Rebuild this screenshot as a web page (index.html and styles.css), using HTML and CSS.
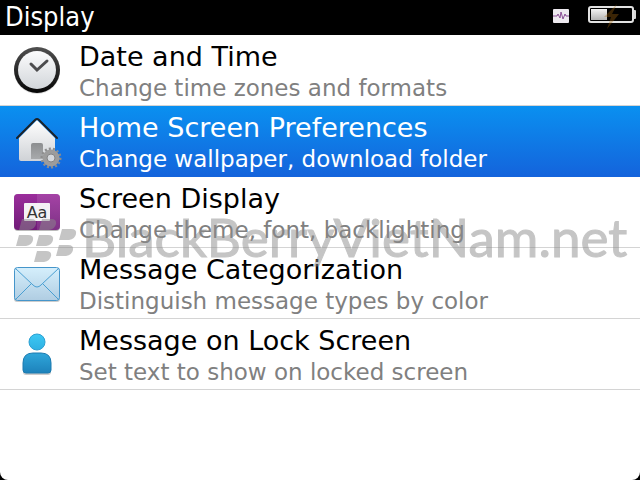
FILE: index.html
```
<!DOCTYPE html>
<html lang="en">
<head>
    <meta charset="UTF-8">
    <meta name="viewport" content="width=device-width, initial-scale=1.0">
    <title>Display</title>
    <link rel="stylesheet" href="styles.css">
</head>
<body>
    <div class="screen">
        <header class="topbar">
            <h1>Display</h1>
            <div class="status">
                <svg class="activity" viewBox="0 0 16 16" aria-hidden="true">
                    <rect y="0" width="16" height="14" rx="1" fill="#eeeaf0"/>
                    <path d="M0 7h4l1-2 2 4 1-6 2 7 2-5 1 2h3" fill="none" stroke="#8a4e96" stroke-width="1"/>
                </svg>
                <svg class="battery" viewBox="0 0 48 28" aria-hidden="true">
                    <defs>
                        <linearGradient id="charge" x1="0" y1="0" x2="0" y2="1">
                            <stop offset="0" stop-color="#f4f4f4"/>
                            <stop offset="1" stop-color="#b4b4b4"/>
                        </linearGradient>
                    </defs>
                    <rect x="1" y="4" width="44" height="15" rx="2" fill="#000" stroke="#e2e2e2" stroke-width="2"/>
                    <path d="M46 7h1q1 0 1 1v7q0 1-1 1h-1z" fill="#d8d8d8"/>
                    <rect x="3" y="6" width="16" height="11" fill="url(#charge)"/>
                    <path d="M29 1L16 14h7l-4 12 12-15h-7z" fill="#a86a10" opacity=".35"/>
                </svg>
            </div>
        </header>

        <nav class="menu">
            <a class="item" href="#">
                <svg class="icon" viewBox="0 0 50 50" aria-hidden="true">
                    <defs>
                        <linearGradient id="rim" x1="0" y1="0" x2="0" y2="1">
                            <stop offset="0" stop-color="#505050"/>
                            <stop offset="1" stop-color="#050505"/>
                        </linearGradient>
                        <linearGradient id="face" x1="0" y1="0" x2="0" y2="1">
                            <stop offset="0" stop-color="#fcfcfd"/>
                            <stop offset="1" stop-color="#d2d6da"/>
                        </linearGradient>
                    </defs>
                    <circle cx="25" cy="26" r="23" fill="#ddd"/>
                    <circle cx="25" cy="25" r="23" fill="url(#rim)"/>
                    <circle cx="25" cy="25" r="19" fill="url(#face)"/>
                    <path d="M19 19l6 6 10-9" fill="none" stroke="#4c4c4e" stroke-width="3" stroke-linecap="round"/>
                </svg>
                <div class="text">
                    <span class="title">Date and Time</span>
                    <span class="desc">Change time zones and formats</span>
                </div>
            </a>

            <a class="item selected" href="#" aria-current="true">
                <svg class="icon" viewBox="0 0 50 50" aria-hidden="true">
                    <defs>
                        <linearGradient id="wall" x1="0" y1="0" x2="0" y2="1">
                            <stop offset="0" stop-color="#ffffff"/>
                            <stop offset="1" stop-color="#cfd2d6"/>
                        </linearGradient>
                        <linearGradient id="door" x1="0" y1="0" x2="0" y2="1">
                            <stop offset="0" stop-color="#8c8e90"/>
                            <stop offset="1" stop-color="#a8aaac"/>
                        </linearGradient>
                    </defs>
                    <path d="M25 4L43 22v21q0 2-2 2H9q-2 0-2-2V22z" fill="url(#wall)"/>
                    <path d="M5 22L23 4q2-2 4 0l18 18" fill="none" stroke="#1c2228" stroke-width="2" stroke-linecap="round"/>
                    <path d="M19 43V29q0-2 2-2h8q2 0 2 2v14z" fill="url(#door)"/>
                    <circle cx="39" cy="42" r="9" fill="none" stroke="#8d8d8d" stroke-width="3" stroke-dasharray="2 2"/>
                    <circle cx="39" cy="42" r="6" fill="none" stroke="#9c9c9c" stroke-width="5"/>
                    <circle cx="39" cy="42" r="4" fill="#d5d8dc" stroke="#858585"/>
                </svg>
                <div class="text">
                    <span class="title">Home Screen Preferences</span>
                    <span class="desc">Change wallpaper, download folder</span>
                </div>
            </a>

            <a class="item" href="#">
                <svg class="icon" viewBox="0 0 50 50" aria-hidden="true">
                    <defs>
                        <linearGradient id="panel" x1="0" y1="0" x2="0" y2="1">
                            <stop offset="0" stop-color="#9b2e9c"/>
                            <stop offset="1" stop-color="#701b78"/>
                        </linearGradient>
                    </defs>
                    <rect x="2" y="7" width="46" height="37" rx="4" fill="#bbb"/>
                    <rect x="2" y="7" width="46" height="36" rx="4" fill="url(#panel)"/>
                    <path d="M25 7h19q4 0 4 4v28q0 4-4 4H25z" fill="#fff" opacity=".1"/>
                    <rect x="12" y="16" width="26" height="18" rx="1" fill="#f4f2f5"/>
                    <text class="glyph" x="25" y="31" text-anchor="middle">Aa</text>
                </svg>
                <div class="text">
                    <span class="title">Screen Display</span>
                    <span class="desc">Change theme, font, backlighting</span>
                </div>
            </a>

            <a class="item" href="#">
                <svg class="icon" viewBox="0 0 50 50" aria-hidden="true">
                    <defs>
                        <linearGradient id="paper" x1="0" y1="0" x2="0" y2="1">
                            <stop offset="0" stop-color="#d5effc"/>
                            <stop offset="1" stop-color="#b0cde2"/>
                        </linearGradient>
                    </defs>
                    <rect x="2" y="10" width="46" height="34" rx="3" fill="#ccc"/>
                    <rect x="2.500" y="9.500" width="45" height="33" rx="3" fill="url(#paper)" stroke="#4595ca"/>
                    <path d="M3 10l18 17q4 4 8 0L47 10M3 42l16-16M47 42L31 26" fill="none" stroke="#4a9fd2"/>
                </svg>
                <div class="text">
                    <span class="title">Message Categorization</span>
                    <span class="desc">Distinguish message types by color</span>
                </div>
            </a>

            <a class="item" href="#">
                <svg class="icon" viewBox="0 0 50 50" aria-hidden="true">
                    <defs>
                        <linearGradient id="head" x1="0" y1="0" x2="0" y2="1">
                            <stop offset="0" stop-color="#3cc8f4"/>
                            <stop offset="1" stop-color="#2fb0e2"/>
                        </linearGradient>
                        <linearGradient id="torso" x1="0" y1="0" x2="0" y2="1">
                            <stop offset="0" stop-color="#2fa6da"/>
                            <stop offset="1" stop-color="#1d82bb"/>
                        </linearGradient>
                    </defs>
                    <circle cx="25" cy="13" r="8" fill="url(#head)" stroke="#2ba0d2"/>
                    <path d="M11 35q0-10 10-10h8q10 0 10 10v8q0 3-3 3H14q-3 0-3-3z" fill="#ccc"/>
                    <path d="M11 34q0-10 10-10h8q10 0 10 10v7q0 3-3 3H14q-3 0-3-3z" fill="url(#torso)" stroke="#1c7bb0"/>
                </svg>
                <div class="text">
                    <span class="title">Message on Lock Screen</span>
                    <span class="desc">Set text to show on locked screen</span>
                </div>
            </a>
        </nav>

        <div class="watermark">
            <svg class="berry" viewBox="0 0 62 46" aria-hidden="true">
                <defs>
                    <path id="seed" d="M3 0h9q6 0 5 5t-7 6H0z"/>
                </defs>
                <use href="#seed" x="3" y="1"/>
                <use href="#seed" x="23" y="1"/>
                <use href="#seed" x="0" y="17"/>
                <use href="#seed" x="20" y="17"/>
                <use href="#seed" x="43" y="11"/>
                <use href="#seed" x="40" y="27"/>
                <use href="#seed" x="18" y="33"/>
            </svg>
            <span>BlackBerryVietNam.net</span>
        </div>
    </div>
</body>
</html>
```

FILE: styles.css
```
* {
    margin: 0;
    padding: 0;
    box-sizing: border-box;
}
body {
    background: #000;
    font-family: "DejaVu Sans", sans-serif;
}
.screen {
    position: relative;
    display: flex;
    flex-direction: column;
    min-height: 100vh;
}
.topbar {
    display: flex;
    justify-content: space-between;
    align-items: center;
    height: 35px;
    padding: 0 4px 2px 5px;
    color: #fff;
}
.topbar h1 {
    font-family: "DejaVu Sans Condensed", "DejaVu Sans", sans-serif;
    font-stretch: condensed;
    font-size: 27px;
    font-weight: normal;
    line-height: 32px;
}
.status {
    display: flex;
    align-items: center;
    gap: 19px;
}
.activity {
    width: 16px;
    height: 16px;
}
.battery {
    width: 48px;
    height: 28px;
}
.menu {
    flex: 1;
    background: #fff;
    border-radius: 0 0 8px 8px;
}
.item {
    display: flex;
    align-items: center;
    gap: 17px;
    height: 71px;
    padding: 0 12px;
    border-bottom: 1px solid #d4d4d4;
    color: #000;
    text-decoration: none;
}
.icon {
    width: 50px;
    height: 50px;
    overflow: visible;
}
.glyph {
    font-size: 16px;
    fill: #333;
}
.text {
    padding-top: 3px;
}
.title,
.desc {
    display: block;
    white-space: nowrap;
}
.title {
    font-size: 27px;
    line-height: 32px;
}
.desc {
    font-size: 23px;
    line-height: 30px;
    color: #808080;
}
.selected {
    background: linear-gradient(#0a90f0, #1464dc);
    border-bottom-color: #1464dc;
    color: #fff;
}
.selected .desc {
    color: #fff;
}
/* Site mark laid over the list */
.watermark {
    position: absolute;
    top: 205px;
    left: 16px;
    display: flex;
    align-items: center;
    gap: 4px;
    font-family: Lato, sans-serif;
    font-size: 53px;
    line-height: 64px;
    color: #8c8c8c;
    -webkit-text-stroke: 1px #8c8c8c;
    opacity: 0.5;
    pointer-events: none;
}
.berry {
    width: 62px;
    height: 46px;
    margin-top: 8px;
    fill: #8c8c8c;
}
```
